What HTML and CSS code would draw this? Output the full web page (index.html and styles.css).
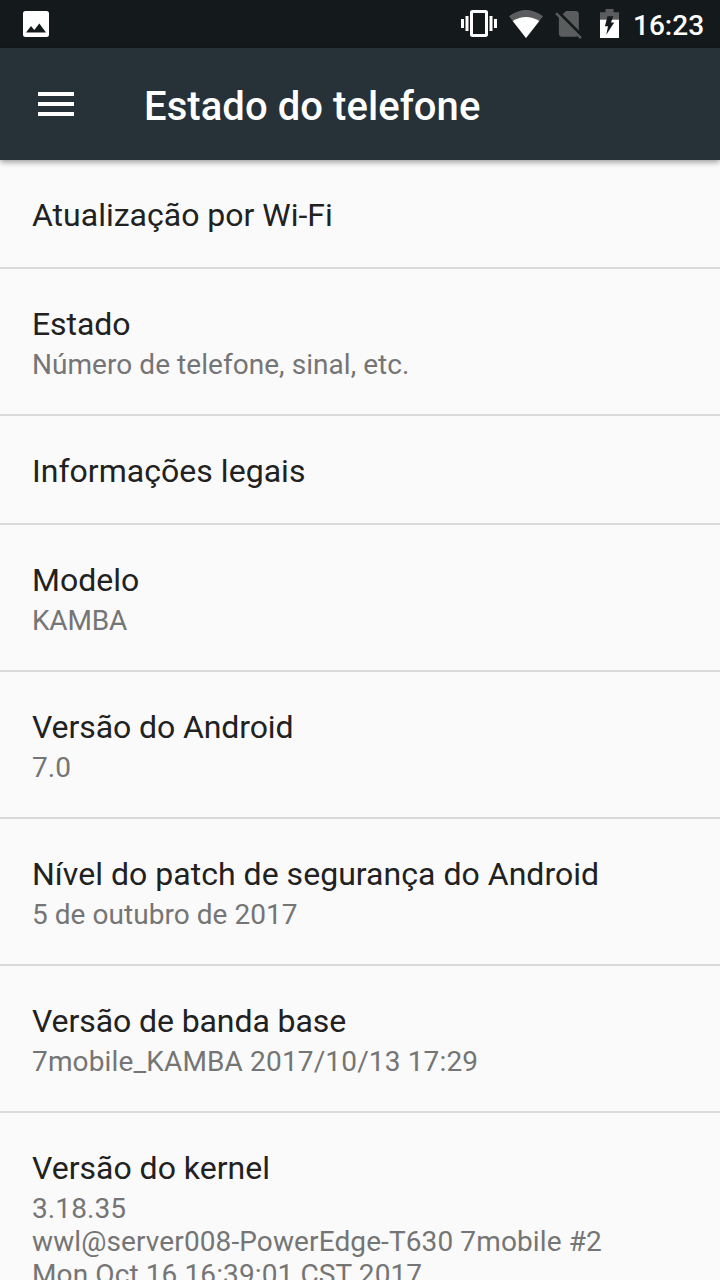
FILE: index.html
```html
<!DOCTYPE html>
<html lang="pt">
<head>
<meta charset="utf-8">
<title>Estado do telefone</title>
<link rel="stylesheet" href="styles.css">
</head>
<body>
<div class="screen">
  <div class="statusbar">
    <svg class="icon" width="26" height="26" viewBox="0 0 26 26"><path fill="#fff" fill-rule="evenodd" d="M2.500 0h21A2.500 2.500 0 0 1 26 2.500v21a2.500 2.500 0 0 1-2.500 2.500h-21A2.500 2.500 0 0 1 0 23.500v-21A2.500 2.500 0 0 1 2.500 0zM3 21.500h20l-6.700-9L11.300 19 8 15z"/></svg>
    <div class="indicators">
      <svg class="vibrate" width="36" height="27" viewBox="0 3 24 18"><path fill="#fff" d="M0 15h2V9H0v6zm3 2h2V7H3v10zm19-8v6h2V9h-2zm-3 8h2V7h-2v10zM16.500 3h-9C6.670 3 6 3.670 6 4.500v15c0 .83.67 1.500 1.500 1.500h9c.83 0 1.500-.67 1.500-1.500v-15c0-.83-.67-1.500-1.500-1.500zM16 19H8V5h8v14z"/></svg>
      <svg class="wifi" width="34" height="28" viewBox="0 0 34 28"><path fill="#5a5c5e" d="M0 6.300Q17-6.500 34 6.300L17 28z"/><path fill="#fff" d="M3.700 11Q17 3 30.300 11L17 28z"/></svg>
      <svg class="sim" width="27" height="28" viewBox="2.380 3 18.740 19.620"><path fill="#5a5c5e" d="M18.990 5c0-1.100-.89-2-1.990-2h-7L7.660 5.340 19 16.680 18.990 5zM3.650 3.880L2.380 5.150 5 7.770V19c0 1.100.9 2 2 2h10.010c.35 0 .67-.1.960-.26l1.880 1.880 1.270-1.270L3.650 3.880z"/></svg>
      <svg class="battery" width="19" height="29" viewBox="0 0 19 29"><path fill="#5a5c5e" d="M5.500 0h8v3.300H19V11H0V3.300h5.500z"/><path fill="#fff" d="M0 10.700h19V29H0z"/><path fill="#14191b" d="M7.500 7.300h5.700l-2.200 6.200h3.200L6.300 25.800l1.700-8.600H4.900z"/></svg>
      <span class="clock">16:23</span>
    </div>
  </div>
  <header class="toolbar">
    <svg class="menu" width="36" height="24" viewBox="0 0 36 24"><path fill="#fff" d="M0 0h36v4H0zM0 10h36v4H0zM0 20h36v4H0z"/></svg>
    <h1 class="heading">Estado do telefone</h1>
  </header>
  <main class="list">
    <section class="item single"><h2 class="title">Atualização por Wi-Fi</h2></section>
    <section class="item"><h2 class="title snug">Estado</h2><p class="summary">Número de telefone, sinal, etc.</p></section>
    <section class="item single"><h2 class="title loose">Informações legais</h2></section>
    <section class="item"><h2 class="title">Modelo</h2><p class="summary caps">KAMBA</p></section>
    <section class="item"><h2 class="title snug">Versão do Android</h2><p class="summary">7.0</p></section>
    <section class="item"><h2 class="title loose">Nível do patch de segurança do Android</h2><p class="summary">5 de outubro de 2017</p></section>
    <section class="item"><h2 class="title snug">Versão de banda base</h2><p class="summary digits">7mobile_KAMBA 2017/10/13 17:29</p></section>
    <section class="item kernel"><h2 class="title">Versão do kernel</h2><p class="summary build">3.18.35<br>wwl@server008-PowerEdge-T630 7mobile #2<br>Mon Oct 16 16:39:01 CST 2017</p></section>
  </main>
</div>
</body>
</html>
```
FILE: styles.css
```css
* { box-sizing: border-box; }
body { margin: 0; font-family: Roboto, sans-serif; background: #fafafa; }
.screen { width: 720px; height: 1280px; overflow: hidden; display: flex; flex-direction: column; }
svg { display: block; flex: none; }
.statusbar { flex: none; height: 48px; padding: 0 16px 0 23px; background: #14191b; display: flex; align-items: center; justify-content: space-between; }
.indicators { display: flex; align-items: flex-start; height: 48px; }
.vibrate { margin-top: 10px; }
.wifi { margin: 10px 0 0 12px; }
.sim { margin: 11px 0 0 12px; }
.battery { margin: 9px 0 0 18px; }
.clock { margin-left: 14px; width: 71px; font-size: 28px; font-weight: 500; line-height: 46px; padding-top: 3px; color: #fff; white-space: nowrap; }
.toolbar { flex: none; z-index: 1; height: 112px; padding: 0 38px; display: flex; align-items: center; background: #263238; box-shadow: 0 2px 6px rgba(0,0,0,.4); }
.heading { margin: 5px 0 0 70px; font-size: 40px; font-weight: 500; line-height: 49px; letter-spacing: .06px; color: #fff; white-space: nowrap; }
.list { flex: none; }
.item { height: 147px; padding: 36px 32px 0; border-bottom: 2px solid #dadada; }
.single { height: 109px; }
.kernel { height: auto; }
.title { margin: 0; font-size: 32px; font-weight: 400; line-height: 38px; color: #212121; white-space: nowrap; }
.snug { letter-spacing: -.09px; }
.loose { letter-spacing: .03px; }
.summary { margin: 5px 0 0; font-size: 28px; line-height: 33px; letter-spacing: .05px; color: #757575; white-space: nowrap; }
.caps { letter-spacing: -.2px; }
.digits { letter-spacing: .15px; }
.build { letter-spacing: .11px; }
```
